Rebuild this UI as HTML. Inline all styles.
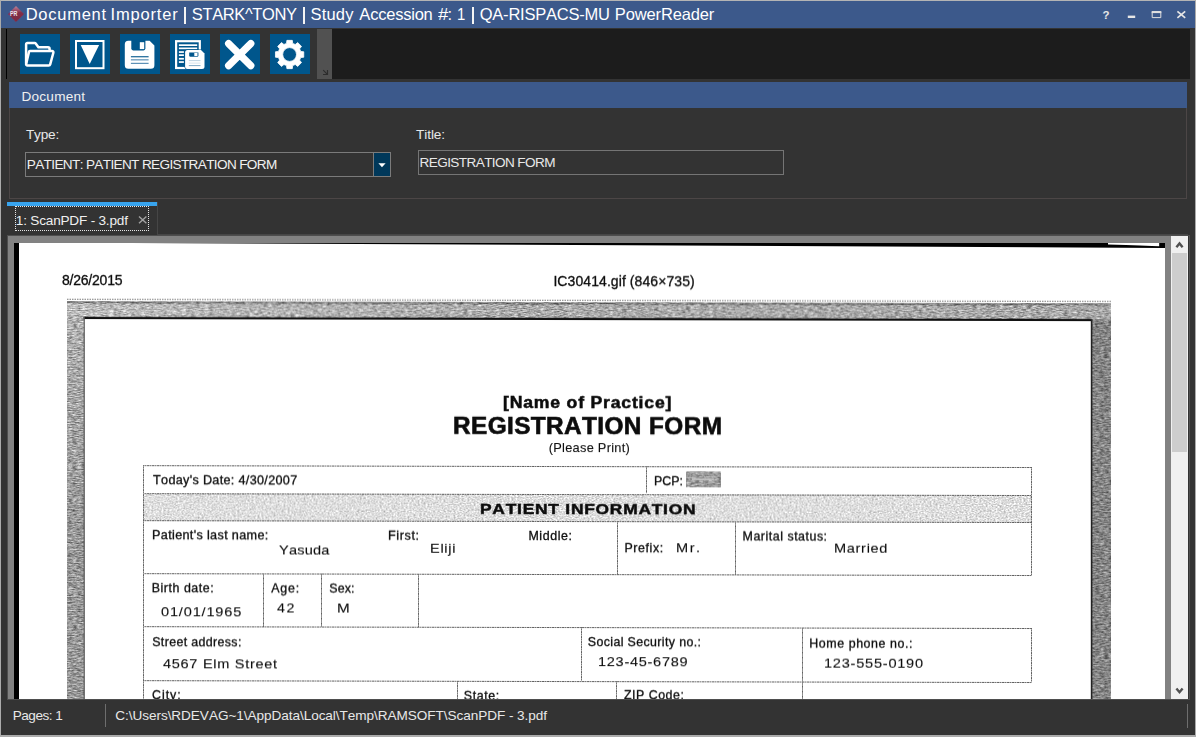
<!DOCTYPE html>
<html lang="en">
<head>
<meta charset="utf-8">
<title>Document Importer</title>
<style>
html,body{margin:0;padding:0;}
body{width:1196px;height:737px;overflow:hidden;background:#333333;font-family:"Liberation Sans",sans-serif;}
#win{position:absolute;left:0;top:0;width:1196px;height:737px;background:#333333;overflow:hidden;}
.abs{position:absolute;}
.t{position:absolute;white-space:pre;line-height:normal;font-kerning:none;font-family:"Liberation Sans",sans-serif;}
/* window frame */
#b-top{left:0;top:0;width:1196px;height:1px;background:#b4b4b4;}
#b-left{left:0;top:0;width:1px;height:737px;background:#ababab;}
#b-right{left:1195px;top:0;width:1px;height:737px;background:#ababab;}
#b-bot{left:0;top:735px;width:1196px;height:2px;background:#ababab;}
#titlebar{left:1px;top:1px;width:1194px;height:27px;background:#3c598b;}
/* toolbar */
#tb-line{left:6px;top:29px;width:1px;height:50px;background:#000;}
#tb-grip{left:317px;top:29px;width:15px;height:50px;background:#515151;}
#tb-black{left:332px;top:29px;width:858px;height:50px;background:#1c1c1c;}
.ico{position:absolute;top:34px;width:40px;height:40px;background:#00568c;}
.ico svg{position:absolute;left:0;top:0;}
/* document group */
#grp{left:9px;top:82px;width:1178px;height:117px;box-sizing:border-box;border:1px solid #4c4646;border-top:none;}
#grp-h{left:9px;top:82px;width:1178px;height:26px;background:#3c598b;}
#combo{left:25px;top:152px;width:366px;height:25px;box-sizing:border-box;border:1px solid #7b7b7b;}
#combo-btn{left:374px;top:153px;width:16px;height:23px;background:#00385a;border-left:1px solid #7b7b7b;margin-left:-1px;}
#title-in{left:418px;top:150px;width:366px;height:25px;box-sizing:border-box;border:1px solid #757575;}
/* tab */
#tab{left:7px;top:202px;width:150px;height:33px;background:#333333;border-right:1px solid #464646;}
#tab-top{left:7px;top:202px;width:150px;height:4px;background:#38a4ee;}
#tab-focus{left:15px;top:206px;width:134px;height:25px;box-sizing:border-box;border:1px dotted #e6e6e6;}
#tab-line{left:157px;top:234px;width:1031px;height:1px;background:#464646;}
/* viewer */
#viewer{left:8px;top:236px;width:1180px;height:463px;background:#828282;overflow:hidden;}
#view-b{left:7px;top:235px;width:1183px;height:465px;box-sizing:border-box;border:1px solid #4e4e4e;}
#page{left:14px;top:243px;width:1151px;height:456px;background:#ffffff;overflow:hidden;}
#sb{left:1171px;top:236px;width:17px;height:463px;background:#f0f0f0;}
#sb-thumb{left:1172px;top:253px;width:15px;height:199px;background:#cdcdcd;}
/* scan (coordinates are window coordinates; container is clipped to the page) */
#scanclip{left:14px;top:243px;width:1151px;height:456px;overflow:hidden;}
#scan{position:absolute;left:-14px;top:-243px;width:1196px;height:737px;transform:skewY(0.1203deg);transform-origin:67px 0;will-change:transform;}
#scan .t{color:#111;}
.ln{position:absolute;background:#8a8a8a;}
.hl{background:repeating-linear-gradient(90deg,#5c5c5c 0 1px,#a8a8a8 1px 2px,#6e6e6e 2px 3px,#b4b4b4 3px 4px,#666 4px 5px);}
.vl{background:repeating-linear-gradient(180deg,#5c5c5c 0 1px,#a8a8a8 1px 2px,#6e6e6e 2px 3px,#b4b4b4 3px 4px,#666 4px 5px);}
/* status */
#st-sep{left:105px;top:704px;width:1px;height:23px;background:#6e6e6e;}
#st-sep2{left:1187px;top:704px;width:1px;height:24px;background:#6e6e6e;}
</style>
</head>
<body>
<div id="win">
  <div class="abs" id="titlebar"></div>

  <!-- app icon -->
  <svg class="abs" style="left:7px;top:5px" width="18" height="18" viewBox="0 0 18 18">
    <defs><linearGradient id="dg" x1="0" y1="0" x2="0" y2="1"><stop offset="0" stop-color="#b8849b"/><stop offset="0.28" stop-color="#9c4c68"/><stop offset="0.42" stop-color="#822f49"/><stop offset="1" stop-color="#7b2840"/></linearGradient></defs>
    <polygon points="9,1.0 16.95,8.9 9,16.75 1.05,8.9" fill="url(#dg)"/>
    <path d="M1.6 9.4 L9 16.7 L16.4 9.4" fill="none" stroke="#ad2440" stroke-width="0.9" stroke-dasharray="0.9 1.5" opacity="0.85"/>
    <text x="2.9" y="10.85" font-family="Liberation Sans" font-weight="700" font-size="6.5" fill="#ebe3ee" textLength="7.5" lengthAdjust="spacingAndGlyphs">PR</text>
  </svg>

  <!-- window buttons -->
  <svg class="abs" style="left:1096px;top:4px" width="96" height="20" viewBox="0 0 96 20">
    <text x="6.6" y="14.9" font-family="Liberation Sans" font-weight="700" font-size="11.5" fill="#e6e6e6">?</text>
    <rect x="31.8" y="11.6" width="7.4" height="2.4" fill="#e6e6e6"/>
    <path d="M56.2 7.7 H64.8 V13.6 H56.2 Z" fill="none" stroke="#e0e0e0" stroke-width="1"/>
    <rect x="55.7" y="7.1" width="9.6" height="2" fill="#e0e0e0"/>
    <path d="M81.4 7.3 L89.2 13.8 M89.2 7.3 L81.4 13.8" stroke="#e6e6e6" stroke-width="1.7" fill="none"/>
  </svg>

  <!-- toolbar -->
  <div class="abs" id="tb-line"></div>
  <div class="abs" id="tb-grip"></div>
  <svg class="abs" style="left:320px;top:68px" width="10" height="10" viewBox="0 0 10 10"><path d="M3.2 2.2 L7.4 6.4 M3 6.5 H7.5 V2" stroke="#2c2c2c" stroke-width="1.15" fill="none"/></svg>
  <div class="abs" id="tb-black"></div>

  <div class="ico" style="left:20px"><svg width="40" height="40" viewBox="0 0 40 40">
    <path d="M6.1 29.5 V10.4 a1.3 1.3 0 0 1 1.3 -1.3 H14.7 a1.2 1.2 0 0 1 1 .5 L18.4 13.3 H28 a1.6 1.6 0 0 1 1.6 1.6 V16" fill="none" stroke="#fff" stroke-width="2.5" stroke-linejoin="round"/>
    <path d="M10 17.1 H32.1 a1.3 1.3 0 0 1 1.25 1.65 L30.2 30.4 a1.6 1.6 0 0 1 -1.55 1.2 H7.4 a1.3 1.3 0 0 1 -1.25 -1.65 L8.9 18.1 a1.3 1.3 0 0 1 1.1 -1 Z" fill="none" stroke="#fff" stroke-width="2.5" stroke-linejoin="round"/>
  </svg></div>
  <div class="ico" style="left:70px"><svg width="40" height="40" viewBox="0 0 40 40">
    <rect x="6" y="7" width="27.5" height="27.2" fill="none" stroke="#fff" stroke-width="2"/>
    <path d="M10.7 11.1 H29.1 L19.7 30 Z" fill="#fff"/>
  </svg></div>
  <div class="ico" style="left:120px"><svg width="40" height="40" viewBox="0 0 40 40">
    <path d="M8.3 6.8 H29.6 L34.4 11.6 V31.2 a3.5 3.5 0 0 1 -3.5 3.5 H8.3 a3.5 3.5 0 0 1 -3.5 -3.5 V10.3 a3.5 3.5 0 0 1 3.5 -3.5 Z" fill="#fff"/>
    <path d="M11.3 5.8 H25.4 V14.6 a1.8 1.8 0 0 1 -1.8 1.8 H13.1 a1.8 1.8 0 0 1 -1.8 -1.8 Z" fill="#00568c"/>
    <rect x="19.8" y="8.2" width="4.4" height="6.9" fill="#fff"/>
    <rect x="10.9" y="22.2" width="17.7" height="1.1" fill="#00568c"/>
    <rect x="10.9" y="25.3" width="17.7" height="1.1" fill="#4d86ae"/>
    <rect x="10.9" y="28.8" width="17.7" height="1.1" fill="#4d86ae"/>
  </svg></div>
  <div class="ico" style="left:170px"><svg width="40" height="40" viewBox="0 0 40 40">
    <rect x="6.1" y="7.2" width="23.7" height="26.8" fill="none" stroke="#fff" stroke-width="2.2"/>
    <rect x="8.9" y="10.3" width="18.3" height="1.7" fill="#fff"/>
    <rect x="8.9" y="13.5" width="18.3" height="1.7" fill="#fff"/>
    <rect x="8.9" y="17.2" width="5" height="1.7" fill="#fff"/>
    <rect x="8.9" y="20.3" width="5" height="1.7" fill="#fff"/>
    <rect x="8.9" y="23.9" width="5" height="1.7" fill="#fff"/>
    <rect x="8.9" y="27.2" width="5" height="1.7" fill="#fff"/>
    <path d="M17.6 16.1 H31 L34.5 19.6 V32.6 a2.5 2.5 0 0 1 -2.5 2.5 H17.6 a2.5 2.5 0 0 1 -2.5 -2.5 V18.6 a2.5 2.5 0 0 1 2.5 -2.5 Z" fill="#fff" stroke="#00568c" stroke-width="1.2" paint-order="stroke"/>
    <path d="M19.2 18.5 H28.4 V21.5 a1.2 1.2 0 0 1 -1.2 1.2 H20.4 a1.2 1.2 0 0 1 -1.2 -1.2 Z" fill="#00568c"/>
    <rect x="24.3" y="18.9" width="3.2" height="3.2" fill="#fff"/>
    <rect x="18.8" y="26.1" width="11.7" height="1" fill="#bcd2e2"/>
    <rect x="18.8" y="28.6" width="11.7" height="1" fill="#d5e3ed"/>
    <rect x="18.8" y="31.1" width="11.7" height="1" fill="#7fa9c6"/>
  </svg></div>
  <div class="ico" style="left:220px"><svg width="40" height="40" viewBox="0 0 40 40">
    <path d="M8.6 9.6 L30.8 31.6 M30.8 9.6 L8.6 31.6" stroke="#fff" stroke-width="7.2" stroke-linecap="round" fill="none"/>
  </svg></div>
  <div class="ico" style="left:270px"><svg width="40" height="40" viewBox="0 0 40 40">
    <path d="M16.53 9.42 L16.88 6.36 L22.32 6.36 L22.67 9.42 L25.27 10.49 L27.68 8.58 L31.52 12.42 L29.61 14.83 L30.68 17.43 L33.74 17.78 L33.74 23.22 L30.68 23.57 L29.61 26.17 L31.52 28.58 L27.68 32.42 L25.27 30.51 L22.67 31.58 L22.32 34.64 L16.88 34.64 L16.53 31.58 L13.93 30.51 L11.52 32.42 L7.68 28.58 L9.59 26.17 L8.52 23.57 L5.46 23.22 L5.46 17.78 L8.52 17.43 L9.59 14.83 L7.68 12.42 L11.52 8.58 L13.93 10.49 Z M26.50 20.50 A6.9 6.9 0 1 0 12.70 20.50 A6.9 6.9 0 1 0 26.50 20.50 Z" fill="#fff" fill-rule="evenodd" stroke="#fff" stroke-width="0.8" stroke-linejoin="round"/>
  </svg></div>


  <!-- document group -->
  <div class="abs" id="grp"></div>
  <div class="abs" id="grp-h"></div>
  <div class="abs" id="combo"></div>
  <div class="abs" id="combo-btn"></div>
  <svg class="abs" style="left:374px;top:153px" width="16" height="23" viewBox="0 0 16 23"><path d="M4.4 10.2 H11.6 L8 14.2 Z" fill="#ffffff"/></svg>
  <div class="abs" id="title-in"></div>

  <!-- tab -->
  <div class="abs" id="tab-line"></div>
  <div class="abs" id="tab"></div>
  <div class="abs" id="tab-top"></div>
  <div class="abs" id="tab-focus"></div>
  <svg class="abs" style="left:136px;top:213px" width="14" height="14" viewBox="0 0 14 14"><path d="M3 3.4 L10.4 10.2 M10.4 3.4 L3 10.2" stroke="#a2a2a2" stroke-width="1.4" fill="none"/></svg>

  <!-- viewer -->
  <div class="abs" id="view-b"></div>
  <div class="abs" id="viewer"></div>
  <div class="abs" id="page"></div>
  <div class="abs" id="scanclip"><div id="scan">
<svg class="abs" style="left:0;top:0" width="1196" height="737" viewBox="0 0 1196 737">
<defs>
<linearGradient id="tg" gradientUnits="userSpaceOnUse" x1="67" y1="0" x2="1111" y2="0"><stop offset="0" stop-color="#bcbcbc"/><stop offset="0.45" stop-color="#aaaaaa"/><stop offset="1" stop-color="#a8a8a8"/></linearGradient>
<linearGradient id="lg" gradientUnits="userSpaceOnUse" x1="0" y1="317" x2="0" y2="520"><stop offset="0" stop-color="#b0b0b0"/><stop offset="1" stop-color="#989898"/></linearGradient>
<filter id="nz" x="0" y="0" width="100%" height="100%" color-interpolation-filters="sRGB">
  <feTurbulence type="fractalNoise" baseFrequency="0.22 0.85" numOctaves="3" seed="11" result="n"/>
  <feColorMatrix in="n" type="matrix" values="1 0 0 0 0  1 0 0 0 0  1 0 0 0 0  0 0 0 0 1" result="q"/>
  <feComposite in="SourceGraphic" in2="q" operator="arithmetic" k1="0" k2="1" k3="0.76" k4="-0.38" result="m"/>
  <feComposite in="m" in2="SourceGraphic" operator="in"/>
</filter>
<filter id="nzl" x="0" y="0" width="100%" height="100%" color-interpolation-filters="sRGB">
  <feTurbulence type="fractalNoise" baseFrequency="0.5 0.85" numOctaves="3" seed="5" result="n"/>
  <feColorMatrix in="n" type="matrix" values="1 0 0 0 0  1 0 0 0 0  1 0 0 0 0  0 0 0 0 1" result="q"/>
  <feComposite in="SourceGraphic" in2="q" operator="arithmetic" k1="0" k2="1" k3="0.55" k4="-0.275" result="m"/>
  <feComposite in="m" in2="SourceGraphic" operator="in"/>
</filter>
</defs>
<g filter="url(#nz)">
  <!-- top band -->
  <rect x="67" y="301.6" width="1044" height="16" fill="url(#tg)"/>
  <rect x="67" y="301.6" width="1044" height="1.8" fill="#7a7a7a"/>
  <!-- left strip -->
  <rect x="67" y="317" width="17.2" height="420" fill="url(#lg)"/>
  <!-- right strip -->
  <rect x="1092" y="317" width="19" height="420" fill="#848484"/>

  <!-- PCP patch -->
  <rect x="686.3" y="470.4" width="34.4" height="15.6" fill="#9a9a9a"/>
</g>
<g filter="url(#nzl)"><rect x="144" y="493" width="887" height="27" fill="#dedede"/></g>
<!-- thin dotted line above the frame -->
<line x1="67" y1="299.3" x2="1111" y2="299.3" stroke="#777" stroke-width="1" stroke-dasharray="1.5 1"/>
<!-- inner black line -->
<rect x="83.6" y="316.8" width="1008.6" height="2.2" fill="#111"/>
<rect x="83.6" y="317" width="1.2" height="420" fill="#555"/>
<rect x="1090.8" y="317" width="1.6" height="420" fill="#222"/>
<!-- light streak in PCP patch -->
<rect x="692" y="477.2" width="22" height="1.6" fill="#d4d4d4" opacity="0.8"/>
</svg>
<div class="ln hl" style="left:143.4px;top:465.2px;width:888.8px;height:1px"></div>
<div class="ln hl" style="left:143.4px;top:492.5px;width:888.8px;height:1px"></div>
<div class="ln hl" style="left:143.4px;top:520.2px;width:888.8px;height:1px"></div>
<div class="ln hl" style="left:143.4px;top:573.2px;width:888.8px;height:1px"></div>
<div class="ln hl" style="left:143.4px;top:626.0px;width:888.8px;height:1px"></div>
<div class="ln hl" style="left:143.4px;top:680.4px;width:888.8px;height:1px"></div>
<div class="ln vl" style="left:143.4px;top:465.2px;width:1px;height:274.8px"></div>
<div class="ln vl" style="left:1031.2px;top:465.2px;width:1px;height:108.0px"></div>
<div class="ln vl" style="left:1031.2px;top:626.0px;width:1px;height:54.4px"></div>
<div class="ln vl" style="left:646.2px;top:465.2px;width:1px;height:27.3px"></div>
<div class="ln vl" style="left:617.1px;top:520.2px;width:1px;height:53.0px"></div>
<div class="ln vl" style="left:735.1px;top:520.2px;width:1px;height:53.0px"></div>
<div class="ln vl" style="left:263.1px;top:573.2px;width:1px;height:52.8px"></div>
<div class="ln vl" style="left:321.3px;top:573.2px;width:1px;height:52.8px"></div>
<div class="ln vl" style="left:418.3px;top:573.2px;width:1px;height:52.8px"></div>
<div class="ln vl" style="left:580.6px;top:626.0px;width:1px;height:54.4px"></div>
<div class="ln vl" style="left:801.8px;top:626.0px;width:1px;height:54.4px"></div>
<div class="ln vl" style="left:457.0px;top:680.4px;width:1px;height:59.6px"></div>
<div class="ln vl" style="left:616.4px;top:680.4px;width:1px;height:59.6px"></div>
<div class="ln vl" style="left:801.8px;top:680.4px;width:1px;height:59.6px"></div>
<span class="t" style="left:61.89px;top:272.28px;font-size:14px;letter-spacing:-0.198px;color:#0c0c0c;-webkit-text-stroke:0.3px #0c0c0c;">8/26/2015</span>
<span class="t" style="left:553.41px;top:272.16px;font-size:14px;letter-spacing:0.077px;color:#0c0c0c;-webkit-text-stroke:0.3px #0c0c0c;">IC30414.gif (846×735)</span>
<span class="t" style="left:503.41px;top:392.83px;font-size:16px;letter-spacing:0.740px;color:#0c0c0c;font-weight:700;transform:scaleX(1.1000);transform-origin:0 0;-webkit-text-stroke:0.5px #0c0c0c;">[Name of Practice]</span>
<span class="t" style="left:452.97px;top:411.59px;font-size:23px;letter-spacing:0.366px;color:#0c0c0c;font-weight:700;transform:scaleX(1.0600);transform-origin:0 0;-webkit-text-stroke:0.6px #0c0c0c;">REGISTRATION FORM</span>
<span class="t" style="left:548.81px;top:438.72px;font-size:12.8px;letter-spacing:0.265px;color:#0c0c0c;-webkit-text-stroke:0.1px #0c0c0c;">(Please Print)</span>
<span class="t" style="left:152.52px;top:472.75px;font-size:12.4px;letter-spacing:0.308px;color:#0c0c0c;transform:scaleX(1.0200);transform-origin:0 0;-webkit-text-stroke:0.3px #0c0c0c;">Today&#x27;s Date: 4/30/2007</span>
<span class="t" style="left:653.98px;top:472.82px;font-size:12.4px;letter-spacing:0.003px;color:#0c0c0c;-webkit-text-stroke:0.3px #0c0c0c;">PCP:</span>
<span class="t" style="left:480.14px;top:499.08px;font-size:15.5px;letter-spacing:0.693px;color:#0c0c0c;font-weight:700;transform:scaleX(1.1200);transform-origin:0 0;-webkit-text-stroke:0.5px #0c0c0c;">PATIENT INFORMATION</span>
<span class="t" style="left:151.76px;top:527.78px;font-size:12.4px;letter-spacing:0.331px;color:#0c0c0c;transform:scaleX(1.0200);transform-origin:0 0;-webkit-text-stroke:0.3px #0c0c0c;">Patient&#x27;s last name:</span>
<span class="t" style="left:279.28px;top:542.04px;font-size:13px;letter-spacing:0.168px;color:#0c0c0c;transform:scaleX(1.1200);transform-origin:0 0;-webkit-text-stroke:0.1px #0c0c0c;">Yasuda</span>
<span class="t" style="left:388.26px;top:527.57px;font-size:12.4px;letter-spacing:0.587px;color:#0c0c0c;transform:scaleX(1.0200);transform-origin:0 0;-webkit-text-stroke:0.3px #0c0c0c;">First:</span>
<span class="t" style="left:429.91px;top:540.25px;font-size:13px;letter-spacing:0.608px;color:#0c0c0c;transform:scaleX(1.1200);transform-origin:0 0;-webkit-text-stroke:0.1px #0c0c0c;">Eliji</span>
<span class="t" style="left:528.48px;top:527.56px;font-size:12.4px;letter-spacing:0.579px;color:#0c0c0c;-webkit-text-stroke:0.3px #0c0c0c;">Middle:</span>
<span class="t" style="left:624.48px;top:539.77px;font-size:12.4px;letter-spacing:0.601px;color:#0c0c0c;-webkit-text-stroke:0.3px #0c0c0c;">Prefix:</span>
<span class="t" style="left:676.21px;top:539.13px;font-size:13px;letter-spacing:1.340px;color:#0c0c0c;transform:scaleX(1.1200);transform-origin:0 0;-webkit-text-stroke:0.1px #0c0c0c;">Mr.</span>
<span class="t" style="left:742.58px;top:527.77px;font-size:12.4px;letter-spacing:0.526px;color:#0c0c0c;-webkit-text-stroke:0.3px #0c0c0c;">Marital status:</span>
<span class="t" style="left:834.41px;top:538.77px;font-size:13px;letter-spacing:0.607px;color:#0c0c0c;transform:scaleX(1.1200);transform-origin:0 0;-webkit-text-stroke:0.1px #0c0c0c;">Married</span>
<span class="t" style="left:151.78px;top:580.94px;font-size:12.4px;letter-spacing:0.533px;color:#0c0c0c;-webkit-text-stroke:0.3px #0c0c0c;">Birth date:</span>
<span class="t" style="left:160.63px;top:603.55px;font-size:13px;letter-spacing:0.735px;color:#0c0c0c;transform:scaleX(1.1200);transform-origin:0 0;-webkit-text-stroke:0.1px #0c0c0c;">01/01/1965</span>
<span class="t" style="left:271.18px;top:580.72px;font-size:12.4px;letter-spacing:0.849px;color:#0c0c0c;-webkit-text-stroke:0.3px #0c0c0c;">Age:</span>
<span class="t" style="left:276.97px;top:600.38px;font-size:13px;letter-spacing:1.492px;color:#0c0c0c;transform:scaleX(1.1000);transform-origin:0 0;-webkit-text-stroke:0.1px #0c0c0c;">42</span>
<span class="t" style="left:329.24px;top:580.60px;font-size:12.4px;letter-spacing:0.128px;color:#0c0c0c;-webkit-text-stroke:0.3px #0c0c0c;">Sex:</span>
<span class="t" style="left:336.85px;top:600.25px;font-size:13px;letter-spacing:0.000px;color:#0c0c0c;transform:scaleX(1.1729);transform-origin:0 0;-webkit-text-stroke:0.1px #0c0c0c;">M</span>
<span class="t" style="left:152.24px;top:634.51px;font-size:12.4px;letter-spacing:0.365px;color:#0c0c0c;-webkit-text-stroke:0.3px #0c0c0c;">Street address:</span>
<span class="t" style="left:163.17px;top:655.51px;font-size:13px;letter-spacing:0.615px;color:#0c0c0c;transform:scaleX(1.1200);transform-origin:0 0;-webkit-text-stroke:0.1px #0c0c0c;">4567 Elm Street</span>
<span class="t" style="left:587.84px;top:634.47px;font-size:12.4px;letter-spacing:0.371px;color:#0c0c0c;-webkit-text-stroke:0.3px #0c0c0c;">Social Security no.:</span>
<span class="t" style="left:597.99px;top:652.53px;font-size:13px;letter-spacing:0.627px;color:#0c0c0c;transform:scaleX(1.1200);transform-origin:0 0;-webkit-text-stroke:0.1px #0c0c0c;">123-45-6789</span>
<span class="t" style="left:809.28px;top:634.61px;font-size:12.4px;letter-spacing:0.580px;color:#0c0c0c;-webkit-text-stroke:0.3px #0c0c0c;">Home phone no.:</span>
<span class="t" style="left:824.29px;top:654.34px;font-size:13px;letter-spacing:0.682px;color:#0c0c0c;transform:scaleX(1.1200);transform-origin:0 0;-webkit-text-stroke:0.1px #0c0c0c;">123-555-0190</span>
<span class="t" style="left:151.97px;top:687.77px;font-size:12.4px;letter-spacing:0.990px;color:#0c0c0c;-webkit-text-stroke:0.3px #0c0c0c;">City:</span>
<span class="t" style="left:463.74px;top:687.51px;font-size:12.4px;letter-spacing:0.639px;color:#0c0c0c;-webkit-text-stroke:0.3px #0c0c0c;">State:</span>
<span class="t" style="left:623.91px;top:687.35px;font-size:12.4px;letter-spacing:0.525px;color:#0c0c0c;-webkit-text-stroke:0.3px #0c0c0c;">ZIP Code:</span>
  </div></div>
  <!-- page edge black bands (not skewed) -->
  <div class="abs" style="left:14px;top:243px;width:4.6px;height:456px;background:#000"></div>
  <svg class="abs" style="left:14px;top:242.8px" width="1151" height="8" viewBox="0 0 1151 8">
    <polygon points="118,0 1151,0 1151,4.9" fill="#000"/>
    <path d="M1094 -1 L1145.2 -1 L1145.2 3.3 L1138 3.1 L1126 2.5 L1112 1.9 L1094 1.4 Z" fill="#fff"/>
  </svg>

  <!-- scrollbar -->
  <div class="abs" id="sb"></div>
  <div class="abs" id="sb-thumb"></div>
  <svg class="abs" style="left:1171px;top:236px" width="17" height="17" viewBox="0 0 17 17"><path d="M5.4 11.3 L8.5 7.5 L11.6 11.3" stroke="#505050" stroke-width="2.4" fill="none"/></svg>
  <svg class="abs" style="left:1171px;top:682px" width="17" height="17" viewBox="0 0 17 17"><path d="M5.4 6.4 L8.5 10.2 L11.6 6.4" stroke="#505050" stroke-width="2.4" fill="none"/></svg>

  <!-- status bar -->
  <div class="abs" id="st-sep"></div>
  <div class="abs" id="st-sep2"></div>

  <div class="abs" style="left:184.05px;top:6.9px;width:1.5px;height:17.1px;background:#f4f4f4"></div>
  <div class="abs" style="left:303.25px;top:6.9px;width:1.5px;height:17.1px;background:#f4f4f4"></div>
  <div class="abs" style="left:472.35px;top:6.9px;width:1.5px;height:17.1px;background:#f4f4f4"></div>
<span class="t" style="left:25.65px;top:4.87px;font-size:16.5px;letter-spacing:0.753px;color:#ffffff;">Document</span>
<span class="t" style="left:110.48px;top:4.87px;font-size:16.5px;letter-spacing:0.838px;color:#ffffff;">Importer</span>
<span class="t" style="left:191.85px;top:4.87px;font-size:16.5px;letter-spacing:-0.386px;color:#ffffff;">STARK^TONY</span>
<span class="t" style="left:310.55px;top:4.87px;font-size:16.5px;letter-spacing:0.172px;color:#ffffff;">Study</span>
<span class="t" style="left:359.37px;top:4.87px;font-size:16.5px;letter-spacing:-0.225px;color:#ffffff;">Accession</span>
<span class="t" style="left:437.82px;top:4.87px;font-size:16.5px;letter-spacing:0.000px;color:#ffffff;transform:scaleX(1.1193);transform-origin:0 0;">#</span>
<span class="t" style="left:447.49px;top:4.87px;font-size:16.5px;letter-spacing:0.000px;color:#ffffff;">:</span>
<span class="t" style="left:456.87px;top:4.87px;font-size:16.5px;letter-spacing:0.000px;color:#ffffff;transform:scaleX(0.8996);transform-origin:0 0;">1</span>
<span class="t" style="left:479.72px;top:4.87px;font-size:16.5px;letter-spacing:-0.223px;color:#ffffff;">QA-RISPACS-MU</span>
<span class="t" style="left:614.85px;top:4.87px;font-size:16.5px;letter-spacing:-0.146px;color:#ffffff;">PowerReader</span>
<span class="t" style="left:21.48px;top:88.89px;font-size:13.6px;letter-spacing:0.233px;color:#f0f0f0;">Document</span>
<span class="t" style="left:25.89px;top:126.69px;font-size:13.6px;letter-spacing:-0.142px;color:#e8e8e8;">Type:</span>
<span class="t" style="left:415.99px;top:126.69px;font-size:13.6px;letter-spacing:-0.065px;color:#e8e8e8;">Title:</span>
<span class="t" style="left:26.78px;top:156.69px;font-size:13.6px;letter-spacing:-0.648px;color:#f0f0f0;">PATIENT: PATIENT REGISTRATION FORM</span>
<span class="t" style="left:419.58px;top:154.89px;font-size:13.6px;letter-spacing:-0.612px;color:#e8e8e8;">REGISTRATION FORM</span>
<span class="t" style="left:15.86px;top:212.69px;font-size:13.6px;letter-spacing:-0.208px;color:#f0f0f0;">1: ScanPDF - 3.pdf</span>
<span class="t" style="left:12.78px;top:708.29px;font-size:13.6px;letter-spacing:-0.515px;color:#e8e8e8;">Pages: 1</span>
<span class="t" style="left:115.31px;top:708.29px;font-size:13.6px;letter-spacing:-0.064px;color:#e8e8e8;">C:\Users\RDEVAG~1\AppData\Local\Temp\RAMSOFT\ScanPDF - 3.pdf</span>

  <div class="abs" id="b-top"></div>
  <div class="abs" id="b-left"></div>
  <div class="abs" id="b-right"></div>
  <div class="abs" id="b-bot"></div>
</div>
</body>
</html>
